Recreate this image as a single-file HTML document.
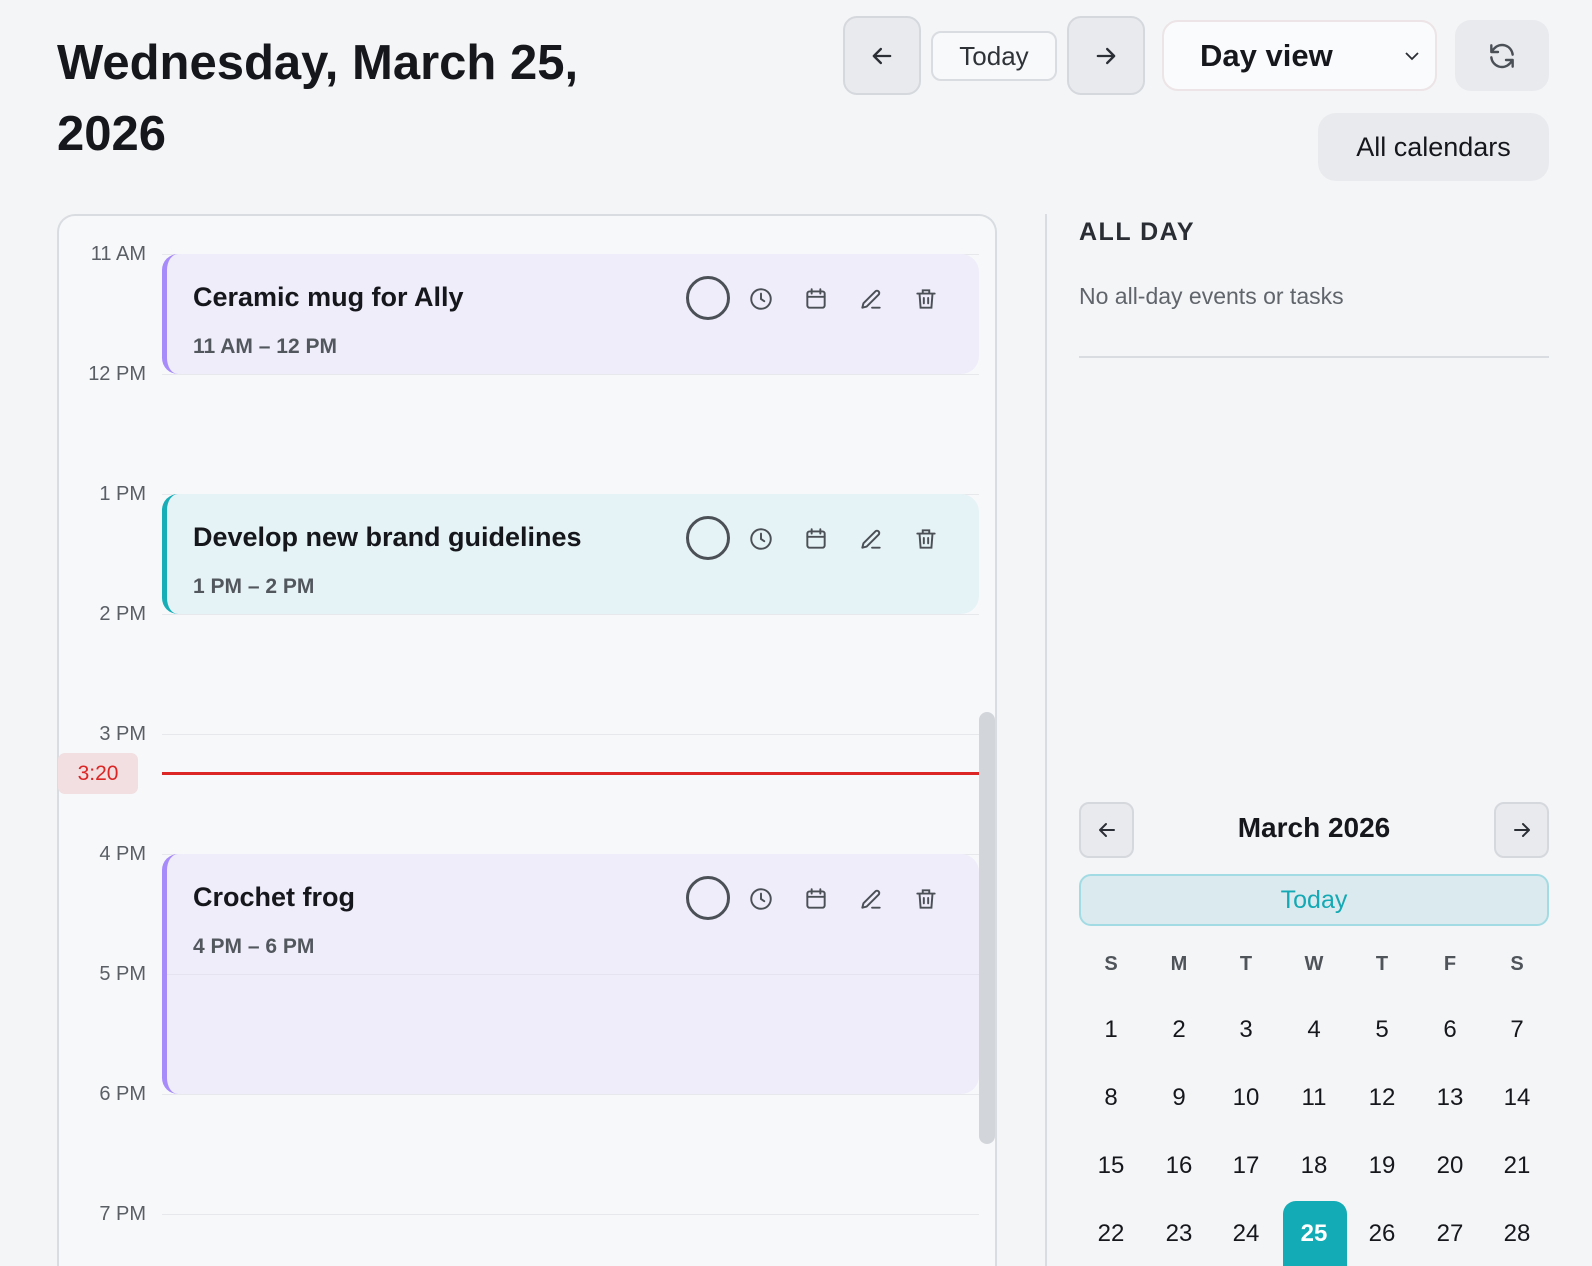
<!DOCTYPE html>
<html><head><meta charset="utf-8"><style>
*{box-sizing:border-box;margin:0;padding:0}
html,body{width:1592px;height:1266px;overflow:hidden}
body{background:#f4f5f7;font-family:"Liberation Sans",sans-serif;color:#15171c}
#w{position:relative;width:1592px;height:1266px;overflow:hidden;background:#f4f5f7}
.abs{position:absolute}
.title{left:57px;top:28px;font-size:49px;font-weight:700;line-height:71px;letter-spacing:0px;width:600px}
.btn{position:absolute;display:flex;align-items:center;justify-content:center;border-radius:14px}
.gray{background:#e9eaee;border:2px solid #d5d8dd}
.card{left:57px;top:214px;width:940px;height:1052px;border:2px solid #d9dce0;border-bottom:none;border-radius:18px 18px 0 0;background:#f7f8fa}
.hl{position:absolute;left:162px;width:817px;height:1px;background:#e6e8eb}
.lab{position:absolute;width:90px;left:56px;text-align:right;font-size:20px;color:#5a5f66}
.ev{position:absolute;left:162px;width:817px;border-radius:16px 18px 18px 16px;border-left:5px solid #a78bfa;background:#efedfa}
.ev .t{position:absolute;left:26px;font-size:27px;font-weight:700;color:#15171c;white-space:nowrap}
.ev .s{position:absolute;left:26px;font-size:21px;color:#52575e;font-weight:600}
.ic{position:absolute;top:32px}
.day{position:absolute;width:60px;text-align:center;font-size:24px;color:#15171c;line-height:30px}
.wd{position:absolute;width:60px;text-align:center;font-size:20px;color:#4f545b;font-weight:700;line-height:24px}
</style></head><body><div id="w">
<div class="abs title">Wednesday, March 25, 2026</div>

<div class="btn gray" style="left:843px;top:16px;width:78px;height:79px"><svg width="28" height="28" viewBox="0 0 24 24" fill="none" stroke="#2b2f35" stroke-width="2" stroke-linecap="round" stroke-linejoin="round"><path d="M19 12H5M11 6l-6 6 6 6"/></svg></div>
<div class="btn" style="left:931px;top:31px;width:126px;height:50px;border:2px solid #d9dce0;border-radius:10px;background:#f8f9fb;font-size:26px;color:#2f3338">Today</div>
<div class="btn gray" style="left:1067px;top:16px;width:78px;height:79px"><svg width="28" height="28" viewBox="0 0 24 24" fill="none" stroke="#2b2f35" stroke-width="2" stroke-linecap="round" stroke-linejoin="round"><path d="M5 12h14M13 6l6 6-6 6"/></svg></div>
<div class="btn" style="left:1162px;top:20px;width:275px;height:71px;border:2px solid #ece4e6;border-radius:16px;background:#fafbfc;justify-content:flex-start;padding-left:36px;font-size:31px;font-weight:700">Day view<svg style="position:absolute;right:14px;top:27px" width="18" height="14" viewBox="0 0 18 14" fill="none" stroke="#2b2f35" stroke-width="1.8"><path d="M3 4l6 6 6-6"/></svg></div>
<div class="btn" style="left:1455px;top:20px;width:94px;height:71px;background:#e9eaee;border-radius:16px"><svg width="32" height="32" viewBox="0 0 24 24" fill="none" stroke="#4b5057" stroke-width="1.8" stroke-linecap="round" stroke-linejoin="round"><path d="M20 11a8 8 0 0 0-14-4.5L4 9M4 4v5h5"/><path d="M4 13a8 8 0 0 0 14 4.5L20 15M20 20v-5h-5"/></svg></div>
<div class="btn" style="left:1318px;top:113px;width:231px;height:68px;background:#e9eaee;border-radius:18px;font-size:27px;color:#15171c">All calendars</div>

<div class="abs card"></div>
<div class="hl" style="top:254px"></div><div class="hl" style="top:374px"></div><div class="hl" style="top:494px"></div><div class="hl" style="top:614px"></div><div class="hl" style="top:734px"></div><div class="hl" style="top:854px"></div><div class="hl" style="top:974px"></div><div class="hl" style="top:1094px"></div><div class="hl" style="top:1214px"></div>
<div class="lab" style="top:243px">11 AM</div>
<div class="lab" style="top:363px">12 PM</div>
<div class="lab" style="top:483px">1 PM</div>
<div class="lab" style="top:603px">2 PM</div>
<div class="lab" style="top:723px">3 PM</div>
<div class="lab" style="top:843px">4 PM</div>
<div class="lab" style="top:963px">5 PM</div>
<div class="lab" style="top:1083px">6 PM</div>
<div class="lab" style="top:1203px">7 PM</div>

<div class="ev" style="top:254px;height:120px">
 <div class="t" style="top:28px">Ceramic mug for Ally</div>
 <div class="s" style="top:81px">11 AM – 12 PM</div>
 <svg class="ic" style="left:518px;top:21px" width="46" height="46" viewBox="0 0 46 46"><circle cx="23" cy="23" r="20.5" fill="none" stroke="#4b5056" stroke-width="3"/></svg>
 <svg class="ic" style="left:581px" width="26" height="26" viewBox="0 0 24 24" fill="none" stroke="#4b5056" stroke-width="1.8" stroke-linecap="round"><circle cx="12" cy="12" r="9"/><path d="M12 7v5l3 2"/></svg>
 <svg class="ic" style="left:636px" width="26" height="26" viewBox="0 0 24 24" fill="none" stroke="#4b5056" stroke-width="1.8" stroke-linecap="round"><rect x="4" y="5" width="16" height="15" rx="2"/><path d="M4 10h16M8 3v4M16 3v4"/></svg>
 <svg class="ic" style="left:691px" width="26" height="26" viewBox="0 0 24 24" fill="none" stroke="#4b5056" stroke-width="1.8" stroke-linecap="round" stroke-linejoin="round"><path d="M4 20l1-4L16 5a2 2 0 0 1 3 3L8 19z"/><path d="M13 20h7"/></svg>
 <svg class="ic" style="left:746px" width="26" height="26" viewBox="0 0 24 24" fill="none" stroke="#4b5056" stroke-width="1.8" stroke-linecap="round"><path d="M4 7h16M9 7V4h6v3M6 7l1 13h10l1-13M10 11v5M14 11v5"/></svg>
</div>
<div class="ev" style="top:494px;height:120px;border-left-color:#17aeb8;background:#e6f3f6">
 <div class="t" style="top:28px">Develop new brand guidelines</div>
 <div class="s" style="top:81px">1 PM – 2 PM</div>
 <svg class="ic" style="left:518px;top:21px" width="46" height="46" viewBox="0 0 46 46"><circle cx="23" cy="23" r="20.5" fill="none" stroke="#4b5056" stroke-width="3"/></svg>
 <svg class="ic" style="left:581px" width="26" height="26" viewBox="0 0 24 24" fill="none" stroke="#4b5056" stroke-width="1.8" stroke-linecap="round"><circle cx="12" cy="12" r="9"/><path d="M12 7v5l3 2"/></svg>
 <svg class="ic" style="left:636px" width="26" height="26" viewBox="0 0 24 24" fill="none" stroke="#4b5056" stroke-width="1.8" stroke-linecap="round"><rect x="4" y="5" width="16" height="15" rx="2"/><path d="M4 10h16M8 3v4M16 3v4"/></svg>
 <svg class="ic" style="left:691px" width="26" height="26" viewBox="0 0 24 24" fill="none" stroke="#4b5056" stroke-width="1.8" stroke-linecap="round" stroke-linejoin="round"><path d="M4 20l1-4L16 5a2 2 0 0 1 3 3L8 19z"/><path d="M13 20h7"/></svg>
 <svg class="ic" style="left:746px" width="26" height="26" viewBox="0 0 24 24" fill="none" stroke="#4b5056" stroke-width="1.8" stroke-linecap="round"><path d="M4 7h16M9 7V4h6v3M6 7l1 13h10l1-13M10 11v5M14 11v5"/></svg>
</div>
<div class="ev" style="top:854px;height:240px">
 <div class="t" style="top:28px">Crochet frog</div>
 <div class="s" style="top:81px">4 PM – 6 PM</div>
 <svg class="ic" style="left:518px;top:21px" width="46" height="46" viewBox="0 0 46 46"><circle cx="23" cy="23" r="20.5" fill="none" stroke="#4b5056" stroke-width="3"/></svg>
 <svg class="ic" style="left:581px" width="26" height="26" viewBox="0 0 24 24" fill="none" stroke="#4b5056" stroke-width="1.8" stroke-linecap="round"><circle cx="12" cy="12" r="9"/><path d="M12 7v5l3 2"/></svg>
 <svg class="ic" style="left:636px" width="26" height="26" viewBox="0 0 24 24" fill="none" stroke="#4b5056" stroke-width="1.8" stroke-linecap="round"><rect x="4" y="5" width="16" height="15" rx="2"/><path d="M4 10h16M8 3v4M16 3v4"/></svg>
 <svg class="ic" style="left:691px" width="26" height="26" viewBox="0 0 24 24" fill="none" stroke="#4b5056" stroke-width="1.8" stroke-linecap="round" stroke-linejoin="round"><path d="M4 20l1-4L16 5a2 2 0 0 1 3 3L8 19z"/><path d="M13 20h7"/></svg>
 <svg class="ic" style="left:746px" width="26" height="26" viewBox="0 0 24 24" fill="none" stroke="#4b5056" stroke-width="1.8" stroke-linecap="round"><path d="M4 7h16M9 7V4h6v3M6 7l1 13h10l1-13M10 11v5M14 11v5"/></svg>
 <div style="position:absolute;left:0;right:0;top:120px;height:1px;background:#e4e3ef"></div>
</div>

<div class="abs" style="left:162px;top:772px;width:817px;height:3px;background:#dc2626"></div>
<div class="abs" style="left:58px;top:753px;width:80px;height:41px;background:#f1dfe1;border-radius:7px;color:#dc2626;font-size:21px;text-align:center;line-height:41px">3:20</div>
<div class="abs" style="left:979px;top:712px;width:16px;height:432px;background:#d2d5da;border-radius:8px"></div>

<div class="abs" style="left:1045px;top:214px;width:2px;height:1052px;background:#d9dce0"></div>

<div class="abs" style="left:1079px;top:218px;font-size:25px;font-weight:700;letter-spacing:1.5px;color:#2a2e34">ALL DAY</div>
<div class="abs" style="left:1079px;top:283px;font-size:23px;color:#60656c">No all-day events or tasks</div>
<div class="abs" style="left:1079px;top:356px;width:470px;height:2px;background:#d9dce0"></div>

<div class="btn gray" style="left:1079px;top:802px;width:55px;height:56px;border-radius:10px"><svg width="24" height="24" viewBox="0 0 24 24" fill="none" stroke="#2b2f35" stroke-width="2" stroke-linecap="round" stroke-linejoin="round"><path d="M19 12H5M11 6l-6 6 6 6"/></svg></div>
<div class="btn gray" style="left:1494px;top:802px;width:55px;height:56px;border-radius:10px"><svg width="24" height="24" viewBox="0 0 24 24" fill="none" stroke="#2b2f35" stroke-width="2" stroke-linecap="round" stroke-linejoin="round"><path d="M5 12h14M13 6l6 6-6 6"/></svg></div>
<div class="abs" style="left:1134px;width:360px;top:812px;text-align:center;font-size:28px;font-weight:700">March 2026</div>
<div class="btn" style="left:1079px;top:874px;width:470px;height:52px;background:#dbeaee;border:2px solid #a3dbe4;border-radius:12px;font-size:25px;color:#14a9b4">Today</div>

<div class="wd" style="left:1081px;top:952px">S</div>
<div class="wd" style="left:1149px;top:952px">M</div>
<div class="wd" style="left:1216px;top:952px">T</div>
<div class="wd" style="left:1284px;top:952px">W</div>
<div class="wd" style="left:1352px;top:952px">T</div>
<div class="wd" style="left:1420px;top:952px">F</div>
<div class="wd" style="left:1487px;top:952px">S</div>

<div class="day" style="left:1081px;top:1015px">1</div>
<div class="day" style="left:1149px;top:1015px">2</div>
<div class="day" style="left:1216px;top:1015px">3</div>
<div class="day" style="left:1284px;top:1015px">4</div>
<div class="day" style="left:1352px;top:1015px">5</div>
<div class="day" style="left:1420px;top:1015px">6</div>
<div class="day" style="left:1487px;top:1015px">7</div>

<div class="day" style="left:1081px;top:1083px">8</div>
<div class="day" style="left:1149px;top:1083px">9</div>
<div class="day" style="left:1216px;top:1083px">10</div>
<div class="day" style="left:1284px;top:1083px">11</div>
<div class="day" style="left:1352px;top:1083px">12</div>
<div class="day" style="left:1420px;top:1083px">13</div>
<div class="day" style="left:1487px;top:1083px">14</div>

<div class="day" style="left:1081px;top:1151px">15</div>
<div class="day" style="left:1149px;top:1151px">16</div>
<div class="day" style="left:1216px;top:1151px">17</div>
<div class="day" style="left:1284px;top:1151px">18</div>
<div class="day" style="left:1352px;top:1151px">19</div>
<div class="day" style="left:1420px;top:1151px">20</div>
<div class="day" style="left:1487px;top:1151px">21</div>

<div class="abs" style="left:1283px;top:1201px;width:64px;height:65px;background:#13abb5;border-radius:13px 13px 0 0"></div>
<div class="day" style="left:1081px;top:1219px">22</div>
<div class="day" style="left:1149px;top:1219px">23</div>
<div class="day" style="left:1216px;top:1219px">24</div>
<div class="day" style="left:1284px;top:1219px;color:#fff;font-weight:700">25</div>
<div class="day" style="left:1352px;top:1219px">26</div>
<div class="day" style="left:1420px;top:1219px">27</div>
<div class="day" style="left:1487px;top:1219px">28</div>
</div></body></html>
